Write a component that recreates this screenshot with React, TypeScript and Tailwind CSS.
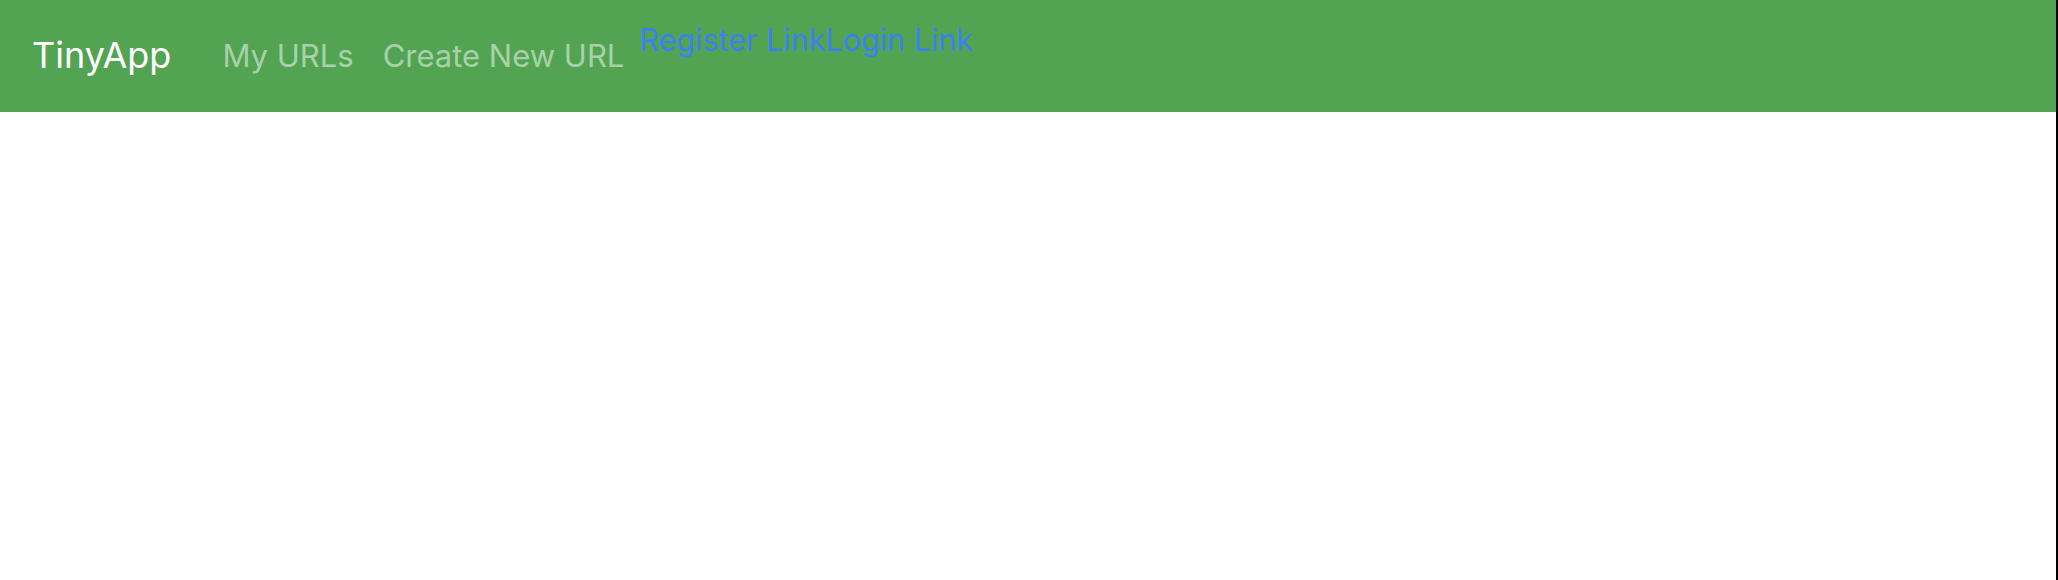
export default function App() {
  return (
    <div
      className="min-h-screen bg-white border-r-2 border-black"
      style={{ fontFamily: 'Inter, "Noto Sans", sans-serif' }}
    >
      <nav className="flex items-start h-[112px] px-8 py-4 bg-[#52a452]">
        <a href="#" className="pt-[9px] mr-[35px] text-[36px] leading-[60px] text-white">
          TinyApp
        </a>
        <ul className="flex">
          <li>
            <a href="#" className="block px-4 py-4 text-[31px] leading-[48px] text-[#a9d1a9]">
              My URLs
            </a>
          </li>
          <li>
            <a href="#" className="block pl-[13px] pr-[15px] py-4 text-[31px] leading-[48px] text-[#a9d1a9]">
              Create New URL
            </a>
          </li>
        </ul>
        <a href="#" className="text-[30.5px] leading-[48px] text-[#3a81f2]">Register Link</a>
        <a href="#" className="text-[30.5px] leading-[48px] text-[#3a81f2]">Login Link</a>
      </nav>
    </div>
  );
}
